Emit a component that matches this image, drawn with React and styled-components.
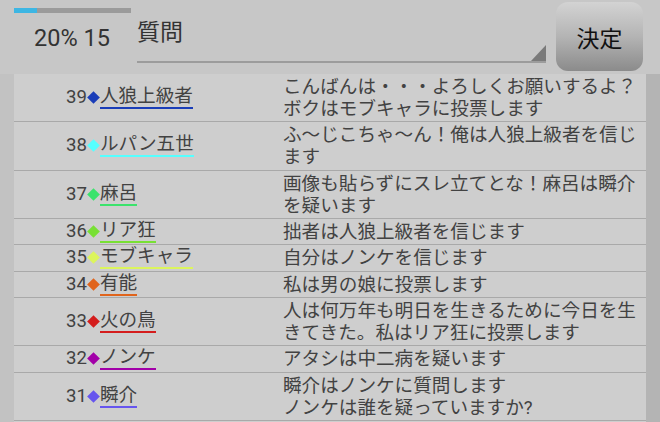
import React from 'react';
import styled, { createGlobalStyle } from 'styled-components';

const Global = createGlobalStyle`
  html, body { margin: 0; padding: 0; background: #c7c7c7; }
  body {
    font-family: Roboto, "Noto Sans CJK JP", sans-serif;
    width: 660px;
    height: 422px;
    overflow: hidden;
  }
`;

const Page = styled.div`
  width: 660px;
  height: 422px;
  display: flex;
  flex-direction: column;
  background: #c7c7c7;
  overflow: hidden;
`;

const Header = styled.header`
  height: 74px;
  flex-shrink: 0;
  display: flex;
  align-items: flex-start;
  padding-left: 14px;
`;

const StatusBlock = styled.div`
  width: 117px;
  display: flex;
  flex-direction: column;
  padding-top: 8px;
`;

const Progress = styled.div`
  height: 5px;
  background: #9b9b9b;
  overflow: hidden;
`;

const ProgressFill = styled.div`
  height: 100%;
  background: #3db6e3;
`;

const Status = styled.div`
  margin-top: 11px;
  padding-left: 20px;
  font-size: 23.5px;
  line-height: 28px;
  color: #333;
  white-space: nowrap;
`;

const Field = styled.div`
  position: relative;
  margin-left: 6px;
  width: 409px;
  height: 43px;
  padding-top: 18px;
  border-bottom: 2px solid #9c9c9c;
  font-size: 23px;
  line-height: 30px;
  color: #333;
  &::after {
    content: '';
    position: absolute;
    right: 0;
    bottom: 0;
    width: 15px;
    height: 16px;
    background: #7a7a7a;
    clip-path: polygon(100% 0, 100% 100%, 0 100%);
  }
`;

const DecideButton = styled.button`
  margin-left: 10px;
  margin-top: 2px;
  width: 87px;
  height: 69px;
  border: none;
  border-radius: 12px;
  background: linear-gradient(to bottom, #d3d3d3 0%, #b4b4b4 50%, #8b8b8b 100%);
  font-family: inherit;
  font-size: 23px;
  color: #111;
  padding: 0;
  cursor: pointer;
`;

const ListArea = styled.div`
  flex: 1;
  padding: 0 14px;
  background: linear-gradient(
    to right,
    #c2c2c2 0,
    #c2c2c2 14px,
    #cecece 14px,
    #cecece calc(100% - 14px),
    #b4b4b4 calc(100% - 14px),
    #b4b4b4 100%
  );
`;

const Table = styled.div`
  display: flex;
  flex-direction: column;
  background: #cecece;
`;

const Row = styled.div`
  display: grid;
  grid-template-columns: 269px 1fr;
  border-bottom: 1px solid #a9a9a9;
  font-size: 18.6px;
  color: #424242;
`;

const NameCell = styled.div`
  display: flex;
  align-items: center;
  padding-left: 52px;
`;

const Num = styled.span`
  line-height: 21px;
`;

const Diamond = styled.span`
  flex-shrink: 0;
  width: 9px;
  height: 9px;
  margin: 0 2px;
  background: ${(p) => p.$color};
  transform: rotate(45deg);
`;

const Name = styled.span`
  line-height: 21px;
  border-bottom: 2px solid ${(p) => p.$color};
  white-space: nowrap;
`;

const Message = styled.div`
  padding: 2px 0 1.33px;
  line-height: 22px;
  white-space: pre-line;
`;

const entries = [
  { n: 39, name: '人狼上級者', color: '#1a3db8', msg: 'こんばんは・・・よろしくお願いするよ？\nボクはモブキャラに投票します' },
  { n: 38, name: 'ルパン五世', color: '#55ffff', msg: 'ふ〜じこちゃ〜ん！俺は人狼上級者を信じ\nます' },
  { n: 37, name: '麻呂', color: '#3be36c', msg: '画像も貼らずにスレ立てとな！麻呂は瞬介\nを疑います' },
  { n: 36, name: 'リア狂', color: '#78e034', msg: '拙者は人狼上級者を信じます' },
  { n: 35, name: 'モブキャラ', color: '#dcf55c', msg: '自分はノンケを信じます' },
  { n: 34, name: '有能', color: '#e0641c', msg: '私は男の娘に投票します' },
  { n: 33, name: '火の鳥', color: '#d41d1d', msg: '人は何万年も明日を生きるために今日を生\nきてきた。私はリア狂に投票します' },
  { n: 32, name: 'ノンケ', color: '#a200a8', msg: 'アタシは中二病を疑います' },
  { n: 31, name: '瞬介', color: '#6655ee', msg: '瞬介はノンケに質問します\nノンケは誰を疑っていますか?' },
];

export default function App() {
  const progress = 20;
  return (
    <>
      <Global />
      <Page>
        <Header>
          <StatusBlock>
            <Progress>
              <ProgressFill style={{ width: `${progress}%` }} />
            </Progress>
            <Status>{progress}% 15</Status>
          </StatusBlock>
          <Field>質問</Field>
          <DecideButton>決定</DecideButton>
        </Header>
        <ListArea>
          <Table>
            {entries.map((e) => (
              <Row key={e.n}>
                <NameCell>
                  <Num>{e.n}</Num>
                  <Diamond $color={e.color} />
                  <Name $color={e.color}>{e.name}</Name>
                </NameCell>
                <Message>{e.msg}</Message>
              </Row>
            ))}
          </Table>
        </ListArea>
      </Page>
    </>
  );
}
